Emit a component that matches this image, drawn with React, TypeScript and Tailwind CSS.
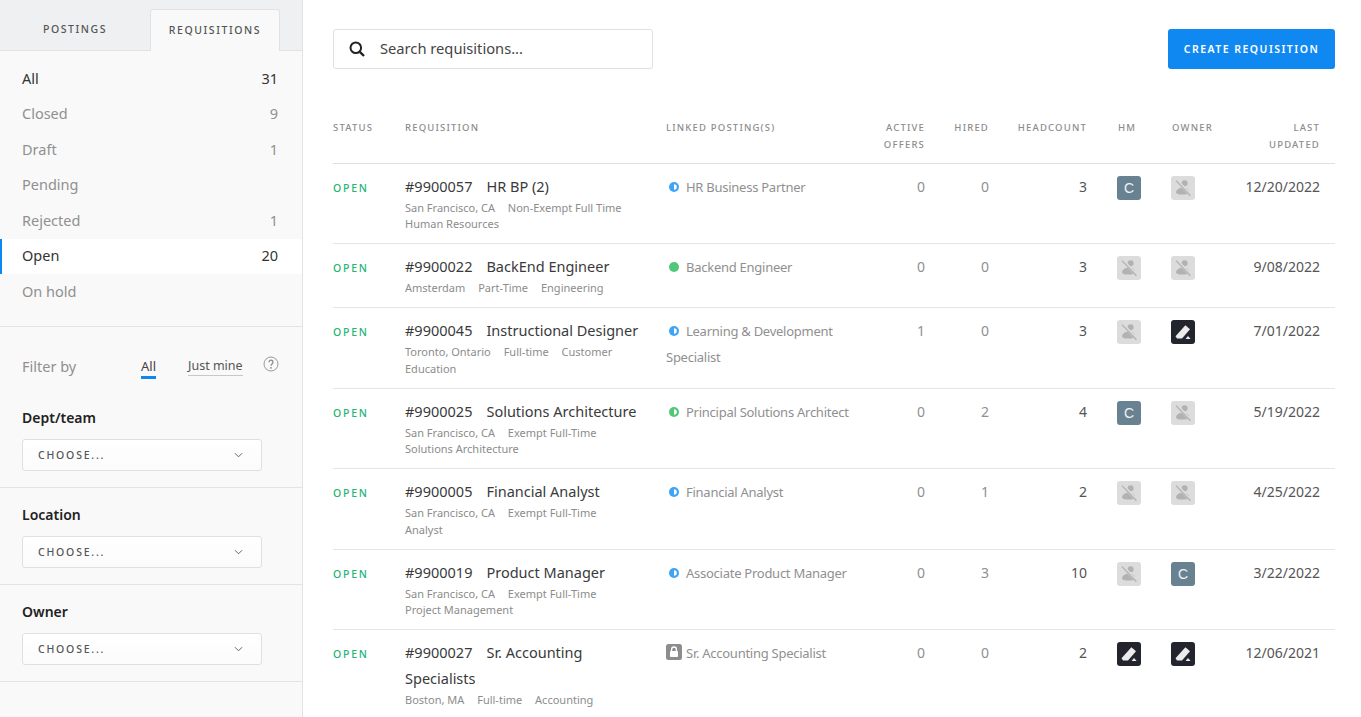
import React from "react";

type Dot = "half-blue" | "green" | "half-green" | "lock";
type Av = "none" | "c" | "pen";
type Row = { id: string; title: string; meta: string[]; dot: Dot; posting: string; offers: number; hired: number; head: number; hm: Av; owner: Av; date: string };

const rows: Row[] = [
  { id: "#9900057", title: "HR BP (2)", meta: ["San Francisco, CA", "Non-Exempt Full Time", "Human Resources"], dot: "half-blue", posting: "HR Business Partner", offers: 0, hired: 0, head: 3, hm: "c", owner: "none", date: "12/20/2022" },
  { id: "#9900022", title: "BackEnd Engineer", meta: ["Amsterdam", "Part-Time", "Engineering"], dot: "green", posting: "Backend Engineer", offers: 0, hired: 0, head: 3, hm: "none", owner: "none", date: "9/08/2022" },
  { id: "#9900045", title: "Instructional Designer", meta: ["Toronto, Ontario", "Full-time", "Customer Education"], dot: "half-blue", posting: "Learning & Development Specialist", offers: 1, hired: 0, head: 3, hm: "none", owner: "pen", date: "7/01/2022" },
  { id: "#9900025", title: "Solutions Architecture", meta: ["San Francisco, CA", "Exempt Full-Time", "Solutions Architecture"], dot: "half-green", posting: "Principal Solutions Architect", offers: 0, hired: 2, head: 4, hm: "c", owner: "none", date: "5/19/2022" },
  { id: "#9900005", title: "Financial Analyst", meta: ["San Francisco, CA", "Exempt Full-Time", "Analyst"], dot: "half-blue", posting: "Financial Analyst", offers: 0, hired: 1, head: 2, hm: "none", owner: "none", date: "4/25/2022" },
  { id: "#9900019", title: "Product Manager", meta: ["San Francisco, CA", "Exempt Full-Time", "Project Management"], dot: "half-blue", posting: "Associate Product Manager", offers: 0, hired: 3, head: 10, hm: "none", owner: "c", date: "3/22/2022" },
  { id: "#9900027", title: "Sr. Accounting Specialists", meta: ["Boston, MA", "Full-time", "Accounting"], dot: "lock", posting: "Sr. Accounting Specialist", offers: 0, hired: 0, head: 2, hm: "pen", owner: "pen", date: "12/06/2021" },
];

const states: { label: string; count?: number; active?: boolean; dark?: boolean }[] = [
  { label: "All", count: 31, dark: true },
  { label: "Closed", count: 9 },
  { label: "Draft", count: 1 },
  { label: "Pending" },
  { label: "Rejected", count: 1 },
  { label: "Open", count: 20, active: true, dark: true },
  { label: "On hold" },
];

function StatusDot({ dot }: { dot: Dot }) {
  if (dot === "lock") {
    return (
      <svg viewBox="0 0 16 16" className="inline-block w-4 h-4 mr-[4px] align-[-2px]">
        <rect width="16" height="16" rx="2.5" fill="#8d8d8d" />
        <rect x="4" y="7" width="8" height="6" rx="0.8" fill="#fff" />
        <path d="M5.6 7V5.4a2.4 2.4 0 0 1 4.8 0V7" fill="none" stroke="#fff" strokeWidth="1.3" />
      </svg>
    );
  }
  const color = dot === "half-blue" ? "#3fa4f5" : "#50c878";
  return (
    <svg viewBox="0 0 10 10" className="inline-block w-[10px] h-[10px] ml-[3px] mr-[7px] align-[0px]">
      <circle cx="5" cy="5" r="5" fill={color} />
      {dot !== "green" && <path d="M5 2.2a2.8 2.8 0 0 1 0 5.6z" fill="#fff" />}
    </svg>
  );
}

function Avatar({ kind }: { kind: Av }) {
  if (kind === "c") {
    return <div className="w-6 h-6 rounded-[3px] bg-[#688292] text-white/90 flex items-center justify-center text-[14px] font-['Liberation_Sans',sans-serif]">C</div>;
  }
  if (kind === "pen") {
    return (
      <div className="w-6 h-6 rounded-[3px] bg-[#22242e] flex items-center justify-center">
        <svg viewBox="0 0 18 18" className="w-[18px] h-[18px]">
          <path d="M1.5 13.2 L11.4 2.2 L16 6.2 L8 15.4 H3 Z" fill="#ececec" />
          <path d="M11.6 16 L14 13 L16.6 16 Z" fill="#ececec" />
        </svg>
      </div>
    );
  }
  return (
    <div className="w-6 h-6 rounded-[3px] bg-[#dcdcdc] flex items-center justify-center">
      <svg viewBox="0 0 18 18" className="w-[18px] h-[18px]">
        <circle cx="10.6" cy="4.2" r="3" fill="#b2b2b2" />
        <path d="M2 13.4 C2.4 10 6.4 8.2 10.6 8.6 C13.4 9 15.2 11.6 15 14 C13 16 3 16.4 2 13.4Z" fill="#b2b2b2" />
        <path d="M2 0.6 L17 16.4" stroke="#dcdcdc" strokeWidth="3" />
        <path d="M2 1.6 L16.4 16.8" stroke="#b2b2b2" strokeWidth="1.3" />
      </svg>
    </div>
  );
}

function Choose({ label }: { label: string }) {
  return (
    <div className="px-[22px] pt-[15px] pb-[16px] border-b border-[#e3e3e3]">
      <div className="text-[14px] leading-[24px] font-semibold text-[#222] mb-[9px]">{label}</div>
      <div className="w-[240px] h-[32px] rounded-[3px] border border-[#e0e0e0] bg-gradient-to-b from-white to-[#fbfbfb] flex items-center justify-between pl-[15px] pr-[18px]">
        <span className="pt-[2px] text-[10.5px] tracking-[0.17em] text-[#555] font-medium">CHOOSE...</span>
        <svg viewBox="0 0 10 6" className="w-[9px] h-[6px]"><path d="M1 1l4 4 4-4" fill="none" stroke="#555" strokeWidth="1" /></svg>
      </div>
    </div>
  );
}

const cols = "grid grid-cols-[72px_261px_190px_69px_64px_98px_84px_55px_94px_15px]";

export default function App() {
  return (
    <div className="flex h-screen overflow-hidden bg-white font-['Noto_Sans',sans-serif] text-[14px]">
      <aside className="w-[303px] shrink-0 bg-[#f9f9f9] border-r border-[#e2e2e2]">
        <div className="h-[51px] bg-[#eff0f2] border-b border-[#e2e2e2] flex items-end">
          <div className="w-[150px] h-[41px] flex items-center justify-center text-[10.5px] font-medium tracking-[0.15em] text-[#555]">POSTINGS</div>
          <div className="w-[130px] h-[42px] -mb-px flex items-center justify-center text-[10.5px] font-medium tracking-[0.15em] text-[#555] bg-[#f9f9f9] border border-b-0 border-[#e2e2e2] rounded-t-[3px]">REQUISITIONS</div>
        </div>
        <div className="pt-[10px] pb-[16.5px] border-b border-[#e3e3e3]">
          {states.map((s) => (
            <div key={s.label} className={`h-[35.5px] flex items-center justify-between pr-[24px] text-[14.5px] ${s.active ? "bg-white border-l-2 border-[#0f87f0] pl-[20px]" : "pl-[22px]"} ${s.dark ? "text-[#333]" : "text-[#909090]"}`}>
              <span>{s.label}</span>
              {s.count !== undefined && <span>{s.count}</span>}
            </div>
          ))}
        </div>
        <div className="h-[64px] pt-[27px] px-[22px] flex items-start text-[12.5px] leading-[24px]">
          <span className="w-[119px] text-[14.5px] text-[#909090]">Filter by</span>
          <span className="w-[47px] text-[13px] text-[#444]"><span className="inline-block leading-[20px] border-b-[3px] border-[#0f87f0]">All</span></span>
          <span className="w-[75px] text-[#555]"><span className="inline-block leading-[19px] border-b border-[#c8c8c8]">Just mine</span></span>
          <svg viewBox="0 0 16 16" className="w-4 h-4 mt-[2px]">
            <circle cx="8" cy="8" r="7" fill="none" stroke="#999" strokeWidth="1" />
            <path d="M6 6.2a2 2 0 1 1 3.2 1.6C8.4 8.4 8 8.8 8 9.8" fill="none" stroke="#888" strokeWidth="1.2" />
            <circle cx="8" cy="11.8" r="0.9" fill="#888" />
          </svg>
        </div>
        <Choose label="Dept/team" />
        <Choose label="Location" />
        <Choose label="Owner" />
      </aside>
      <main className="flex-1 pl-[30px] pr-[26px] pt-[29px] min-w-0">
        <div className="flex items-center justify-between">
          <div className="w-[320px] h-[40px] border border-[#e0e0e0] rounded-[3px] flex items-center pl-[15px]">
            <svg viewBox="0 0 16 16" className="w-[16px] h-[16px] mr-[15px]">
              <circle cx="6.8" cy="6.8" r="5.3" fill="none" stroke="#222" strokeWidth="2" />
              <path d="M10.8 10.8L15 15" stroke="#222" strokeWidth="2.4" />
            </svg>
            <span className="text-[14.7px] text-[#444] pb-[2px]">Search requisitions...</span>
          </div>
          <div className="w-[167px] h-[40px] pt-[2px] rounded-[3px] bg-[#1088f2] text-white flex items-center justify-center text-[10.5px] font-semibold tracking-[0.14em]">CREATE REQUISITION</div>
        </div>
        <div className={`${cols} mt-[50px] border-b border-[#e0e0e0] h-[45px] text-[9.5px] leading-[17px] font-medium tracking-[0.125em] text-[#8c8c8c]`}>
          <div>STATUS</div>
          <div>REQUISITION</div>
          <div>LINKED POSTING(S)</div>
          <div className="text-right">ACTIVE<br />OFFERS</div>
          <div className="text-right">HIRED</div>
          <div className="text-right">HEADCOUNT</div>
          <div className="pl-[31px]">HM</div>
          <div className="pl-[1px]">OWNER</div>
          <div className="text-right">LAST<br />UPDATED</div>
          <div />
        </div>
        {rows.map((r) => (
          <div key={r.id} className={`${cols} border-b border-[#e5e5e5] pt-[10px] pb-[10.6px] leading-[26px] text-[14px]`}>
            <div className="pt-[1px] text-[10.5px] font-medium tracking-[0.17em] text-[#22b573]">OPEN</div>
            <div className="pr-[20px]">
              <div className="-mt-[1px] mb-[1px] text-[14.5px] text-[#3a3a3a]"><span className="mr-[14px]">{r.id}</span>{r.title}</div>
              <div className="pr-[8px] text-[11px] leading-[16.4px] text-[#8c8c8c]">
                {r.meta.map((m) => <React.Fragment key={m}><span className="mr-[10px]">{m}</span>{" "}</React.Fragment>)}
              </div>
            </div>
            <div className="text-[13px] tracking-[-0.02em] text-[#909090]"><StatusDot dot={r.dot} />{r.posting}</div>
            <div className="text-right text-[#909090]">{r.offers}</div>
            <div className="text-right text-[#909090]">{r.hired}</div>
            <div className="text-right text-[#555]">{r.head}</div>
            <div className="pl-[30px] pt-[2px]"><Avatar kind={r.hm} /></div>
            <div className="pt-[2px]"><Avatar kind={r.owner} /></div>
            <div className="text-right text-[#555]">{r.date}</div>
            <div />
          </div>
        ))}
      </main>
    </div>
  );
}
